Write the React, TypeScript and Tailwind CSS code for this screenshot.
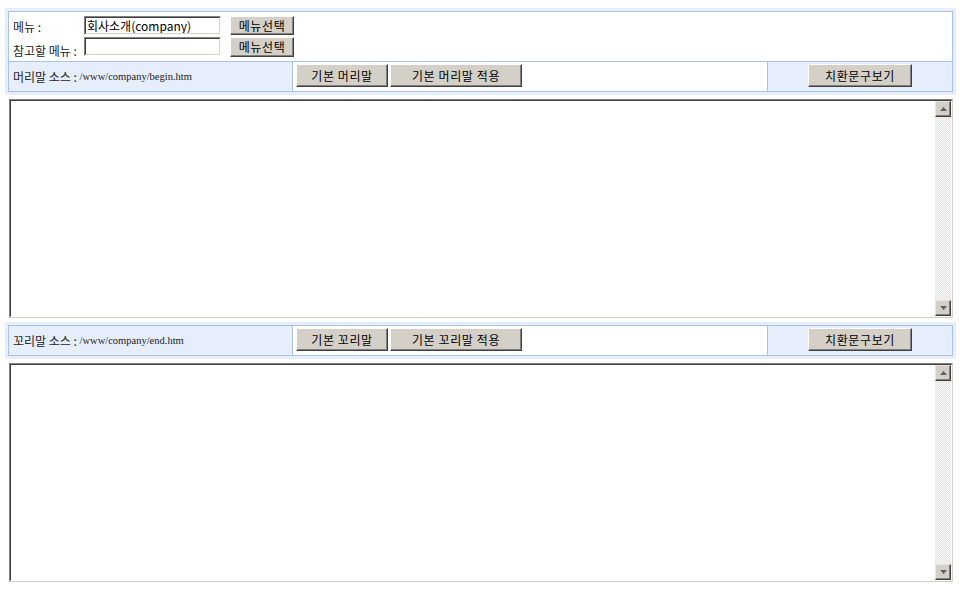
import React from "react";

const kr = "font-['Noto_Sans_CJK_KR','Noto_Sans',sans-serif]";

function Btn({ w, h, children }: { w: string; h: string; children: React.ReactNode }) {
  return (
    <button
      type="button"
      className={`${w} ${h} ${kr} bg-[#d4d0c8] text-black text-[12px] tracking-[0.6px] leading-none border border-t-white border-l-white border-r-[#404040] border-b-[#404040] shadow-[inset_-1px_-1px_0_#808080] flex items-center justify-center p-0`}
    >
      {children}
    </button>
  );
}

function Input({ value }: { value?: string }) {
  return (
    <div className="w-[137px] h-[19px] border border-t-[#808080] border-l-[#808080] border-b-white border-r-white">
      <div className={`w-full h-full border border-t-[#404040] border-l-[#404040] border-b-[#d4d0c8] border-r-[#d4d0c8] bg-white ${kr} text-[12px] leading-[15px] pl-[1px] text-black overflow-hidden whitespace-nowrap`}>
        {value}
      </div>
    </div>
  );
}

function Arrow({ up }: { up?: boolean }) {
  return (
    <div className="w-[16px] h-[16px] bg-[#d4d0c8] border border-t-[#e8e6e0] border-l-[#e8e6e0] border-r-[#404040] border-b-[#404040] shadow-[inset_-1px_-1px_0_#808080] flex items-center justify-center">
      <svg width="7" height="4" viewBox="0 0 7 4">
        {up ? <polygon points="3.5,0 7,4 0,4" fill="#606060" /> : <polygon points="0,0 7,0 3.5,4" fill="#606060" />}
      </svg>
    </div>
  );
}

function TextBox() {
  return (
    <div className="mt-[4px] ml-[4px] mr-[3px] h-[219px] border border-t-[#808080] border-l-[#808080] border-b-[#d4d0c8] border-r-[#d4d0c8]">
      <div className="w-full h-full border border-t-[#404040] border-l-[#404040] border-b-white border-r-white flex">
        <textarea className="flex-1 h-full resize-none outline-none bg-white border-0 p-0" />
        <div className="w-[16px] h-full flex flex-col">
          <Arrow up />
          <div className="flex-1 bg-[repeating-conic-gradient(#e2e2e2_0%_25%,#fbfbfb_0%_50%)] bg-[length:2px_2px]" />
          <Arrow />
        </div>
      </div>
    </div>
  );
}

function SourceRow({ label, path, b1, b2 }: { label: string; path: string; b1: string; b2: string }) {
  return (
    <div className="flex h-[29px]">
      <div className="w-[284px] border-r border-[#a9c2ec] bg-[#e6eefc] flex items-center pl-[4px] whitespace-nowrap">
        <span className={`${kr} text-[12px] text-[#222]`}>{label} :&nbsp;</span>
        <span className="font-['Liberation_Serif',serif] text-[10.5px] text-[#222]">{path}</span>
      </div>
      <div className="w-[475px] border-r border-[#a9c2ec] bg-white flex items-start pt-[2px] pl-[3px] gap-[2px]">
        <Btn w="w-[92px]" h="h-[23px]">{b1}</Btn>
        <Btn w="w-[132px]" h="h-[23px]">{b2}</Btn>
      </div>
      <div className="flex-1 bg-[#e6eefc] flex items-start justify-center pt-[2px]">
        <Btn w="w-[104px]" h="h-[23px]">치환문구보기</Btn>
      </div>
    </div>
  );
}

export default function App() {
  return (
    <div className="w-[960px] h-[589px] bg-white pt-[8px] pl-[5px] pr-[4px] overflow-hidden">
      <div className="bg-[#e6eefc] p-[3px]">
        <div className="border border-[#a9c2ec] bg-white">
          <div className="pt-[4px] pb-[5px] pl-[4px] flex flex-col gap-[2px]">
            <div className="flex items-center h-[19px]">
              <div className={`w-[71px] ${kr} text-[12px] leading-[16px] pt-[3px] text-[#222]`}>메뉴 :</div>
              <Input value="회사소개(company)" />
              <div className="ml-[9px]">
                <Btn w="w-[64px]" h="h-[19px]">메뉴선택</Btn>
              </div>
            </div>
            <div className="flex items-center h-[19px]">
              <div className={`w-[71px] ${kr} text-[12px] leading-[16px] pt-[8px] text-[#222] whitespace-nowrap`}>참고할 메뉴 :</div>
              <Input />
              <div className="ml-[9px]">
                <Btn w="w-[64px]" h="h-[20px]">메뉴선택</Btn>
              </div>
            </div>
          </div>
          <div className="border-t border-[#a9c2ec]">
            <SourceRow label="머리말 소스" path="/www/company/begin.htm" b1="기본 머리말" b2="기본 머리말 적용" />
          </div>
        </div>
      </div>
      <TextBox />
      <div className="mt-[4px] bg-[#e6eefc] p-[3px]">
        <div className="border border-[#a9c2ec] bg-white">
          <SourceRow label="꼬리말 소스" path="/www/company/end.htm" b1="기본 꼬리말" b2="기본 꼬리말 적용" />
        </div>
      </div>
      <TextBox />
    </div>
  );
}
